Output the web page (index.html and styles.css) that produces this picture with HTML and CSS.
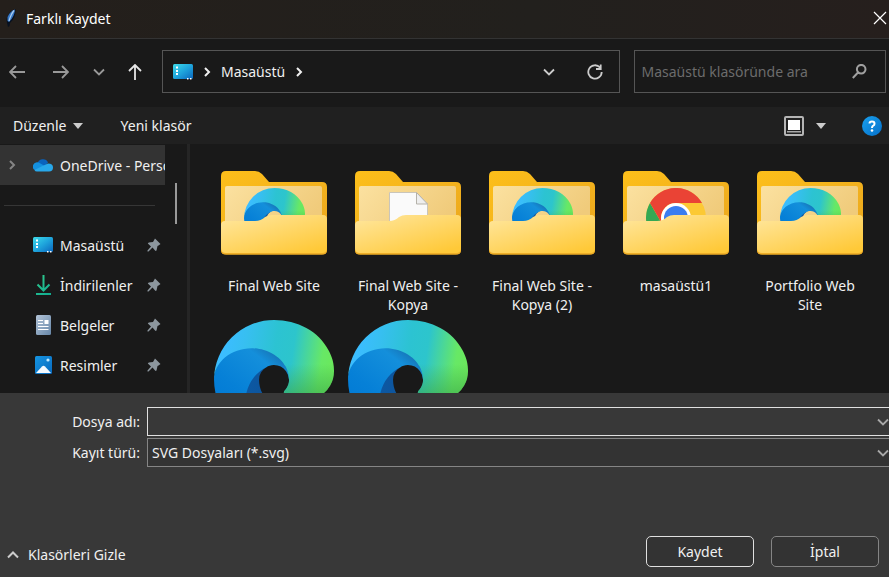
FILE: index.html
```html
<!DOCTYPE html>
<html lang="tr">
<head>
<meta charset="utf-8">
<meta name="viewport" content="width=device-width, initial-scale=1">
<title>Farklı Kaydet</title>
<link rel="stylesheet" href="styles.css">
</head>
<body>
<svg class="defs" aria-hidden="true">
  <defs>
    <linearGradient id="edge-top" x1="0" y1="0.4" x2="1" y2="0.5">
      <stop offset="0.08" stop-color="#3bbdff"/><stop offset="0.25" stop-color="#37bff0"/><stop offset="0.5" stop-color="#2cc3d2"/><stop offset="0.65" stop-color="#2dc5cc"/><stop offset="0.9" stop-color="#67e866"/><stop offset="1" stop-color="#6be85c"/>
    </linearGradient>
    <linearGradient id="edge-shade" x1="0" y1="0" x2="0" y2="1">
      <stop offset="0.55" stop-color="#3aa848" stop-opacity="0"/><stop offset="1" stop-color="#3aa848" stop-opacity="0.7"/>
    </linearGradient>
    <linearGradient id="edge-mid" x1="0.6" y1="0" x2="0.1" y2="0.8">
      <stop offset="0" stop-color="#1676b8"/><stop offset="0.15" stop-color="#148fdb"/><stop offset="0.6" stop-color="#0680d7"/><stop offset="1" stop-color="#0078d4"/>
    </linearGradient>
    <linearGradient id="edge-low" x1="0" y1="0" x2="1" y2="0">
      <stop offset="0" stop-color="#0c59a4"/><stop offset="1" stop-color="#114a8b"/>
    </linearGradient>
    <linearGradient id="folder-back" x1="0" y1="0" x2="1" y2="1">
      <stop offset="0" stop-color="#fdbf1a"/><stop offset="1" stop-color="#e9a51f"/>
    </linearGradient>
    <linearGradient id="folder-sheet" x1="0" y1="0" x2="1" y2="0.4">
      <stop offset="0" stop-color="#fbe1a0"/><stop offset="1" stop-color="#f0cb7b"/>
    </linearGradient>
    <linearGradient id="folder-front" x1="0" y1="0" x2="0.8" y2="1">
      <stop offset="0" stop-color="#ffe7a0"/><stop offset="1" stop-color="#ffc938"/>
    </linearGradient>
    <linearGradient id="screen" x1="0" y1="0" x2="1" y2="1">
      <stop offset="0" stop-color="#3ddcea"/><stop offset="0.5" stop-color="#1fa5dc"/><stop offset="1" stop-color="#0b66bd"/>
    </linearGradient>
    <linearGradient id="paper" x1="0" y1="0" x2="1" y2="1">
      <stop offset="0" stop-color="#b3c4d8"/><stop offset="1" stop-color="#6787a8"/>
    </linearGradient>
    <linearGradient id="photo" x1="0" y1="0" x2="1" y2="1">
      <stop offset="0" stop-color="#1595e2"/><stop offset="1" stop-color="#0969bd"/>
    </linearGradient>
    <linearGradient id="down" gradientUnits="userSpaceOnUse" x1="0" y1="0" x2="16" y2="20">
      <stop offset="0" stop-color="#35cf8c"/><stop offset="1" stop-color="#12ad91"/>
    </linearGradient>
    <linearGradient id="help" x1="0" y1="0" x2="1" y2="1">
      <stop offset="0" stop-color="#18a0ee"/><stop offset="1" stop-color="#0670ca"/>
    </linearGradient>
  </defs>
  <symbol id="edge" viewBox="0 0 256 256">
    <g transform="translate(-4.63 -4.92)">
      <path fill="url(#edge-low)" d="M235.68 195.46a93.73 93.73 0 0 1-10.54 4.71 101.87 101.87 0 0 1-35.9 6.46c-47.32 0-88.54-32.55-88.54-74.32A31.48 31.48 0 0 1 117.13 105c-42.8 1.8-53.8 46.4-53.8 72.53 0 73.88 68.09 81.37 82.76 81.37 7.91 0 19.84-2.3 27-4.56l1.31-.44a128.34 128.34 0 0 0 66.6-52.8 4 4 0 0 0-5.32-5.64z"/>
      <path fill="url(#edge-mid)" d="M110.34 246.34A79.2 79.2 0 0 1 87.6 225a80.72 80.72 0 0 1 29.53-120c3.12-1.47 8.45-4.13 15.54-4a32.35 32.35 0 0 1 25.69 13 31.88 31.88 0 0 1 6.36 18.66c0-.21 24.46-79.6-80-79.6-43.9 0-80 41.66-80 78.21a130.15 130.15 0 0 0 12.11 56 128 128 0 0 0 156.38 67.11 75.55 75.55 0 0 1-62.78-8z"/>
      <path fill="url(#edge-top)" d="M156.94 153.78c-.81 1.05-3.3 2.5-3.3 5.66 0 2.61 1.7 5.12 4.72 7.23 14.38 10 41.49 8.68 41.56 8.68a59.56 59.56 0 0 0 30.27-8.35A61.38 61.38 0 0 0 260.63 114c.26-22.41-8-37.31-11.34-43.91C228.12 28.73 182.44 4.92 132.63 4.92a128 128 0 0 0-128 126.2c.48-36.54 36.8-66.05 80-66.05 3.5 0 23.46.34 42 10.07 16.34 8.58 24.9 18.94 30.85 29.21 6.18 10.67 7.28 24.15 7.28 29.52s-2.74 13.33-7.82 19.91z"/>
      <path fill="url(#edge-shade)" d="M156.94 153.78c-.81 1.05-3.3 2.5-3.3 5.66 0 2.61 1.7 5.12 4.72 7.23 14.38 10 41.49 8.68 41.56 8.68a59.56 59.56 0 0 0 30.27-8.35A61.38 61.38 0 0 0 260.63 114c.26-22.41-8-37.31-11.34-43.91C228.12 28.73 182.44 4.92 132.63 4.92a128 128 0 0 0-128 126.2c.48-36.54 36.8-66.05 80-66.05 3.5 0 23.46.34 42 10.07 16.34 8.58 24.9 18.94 30.85 29.21 6.18 10.67 7.28 24.15 7.28 29.52s-2.74 13.33-7.82 19.91z"/>
    </g>
  </symbol>
  <symbol id="chrome" viewBox="0 0 60 60">
    <circle cx="30" cy="30" r="30" fill="#fcc934"/>
    <path fill="#34a853" d="M4 15A30 30 0 0 0 30 60L43 37.500 17 37.500z"/>
    <path fill="#ea4335" d="M4 15A30 30 0 0 1 56 15H30A15 15 0 0 0 17 37.500z"/>
    <circle cx="30" cy="30" r="15" fill="#fff"/>
    <circle cx="30" cy="30" r="12" fill="#3b7df0"/>
  </symbol>
  <symbol id="folder-rear" viewBox="0 0 106 84">
    <path fill="url(#folder-back)" d="M5 0H34Q38 0 41 3L48 11H101Q106 11 106 16V79Q106 83.500 101 83.500H5Q0 83.500 0 79V5Q0 0 5 0z"/>
    <path fill="url(#folder-sheet)" d="M6 15H99Q101 15 101 17V60H4V17Q4 15 6 15z"/>
  </symbol>
  <symbol id="folder-face" viewBox="0 0 106 84">
    <path fill="#eead27" d="M0 70H106V79Q106 83.500 101 83.500H5Q0 83.500 0 79z"/>
    <path fill="url(#folder-front)" d="M4 50H34Q40 50 44 46 47 44 51 44H102Q106 44 106 48V77Q106 82 101 82H5Q0 82 0 77V54Q0 50 4 50z"/>
  </symbol>
  <symbol id="desktop" viewBox="0 0 20 16">
    <rect width="20" height="15" rx="1.500" fill="url(#screen)"/>
    <path fill="#fff" d="M3 2.500h2v2H3zM3 6h2v2H3zM3 9h2v2H3zM14 14h1.500v1.500H14zM17 14h1.500v1.500H17z"/>
  </symbol>
  <symbol id="pin" viewBox="0 0 14 14">
    <path fill="#8c969e" d="M8 .5 13.500 6 11.500 7.500 10.500 8 9.500 12.500 8.500 13 5.500 9.500 1.500 13.500.5 13.500.5 12.500 4 8.500.8 5.500 1.800 4.500 6 4z"/>
  </symbol>
  <symbol id="chevron" viewBox="0 0 12 8">
    <path fill="none" stroke="currentColor" stroke-width="1.800" d="M1 1.500 6 6.500 11 1.500"/>
  </symbol>
  <symbol id="chevron-right" viewBox="0 0 8 12">
    <path fill="none" stroke="currentColor" stroke-width="2" d="M2 2 6 6 2 10"/>
  </symbol>
</svg>

<header class="titlebar">
  <svg class="feather" viewBox="0 0 10 18" aria-hidden="true">
    <path fill="#07101f" d="M9.500 0Q3 2 .5 10L1 14 2 18 3.500 17 4 14Q10 9 9.500 0z"/>
    <path fill="#3676c4" d="M9 .5Q4 2 1.500 8L1.500 12 3 13Q8.500 8 9 .5z"/>
    <path fill="none" stroke="#a9cdf0" stroke-width="1.200" d="M8 1.500Q5 5 3 12"/>
  </svg>
  <h1 class="title">Farklı Kaydet</h1>
  <button class="close" type="button" aria-label="Kapat">
    <svg viewBox="0 0 12 12" width="12" height="12"><path stroke="#fff" stroke-width="1.200" d="M0 0 12 12M12 0 0 12"/></svg>
  </button>
</header>

<nav class="navbar">
  <div class="history">
    <button class="nav-button" type="button" aria-label="Geri"><svg viewBox="0 0 16 14" width="16" height="14"><path d="M16 7H1M7 1 1 7 7 13"/></svg></button>
    <button class="nav-button" type="button" aria-label="İleri"><svg viewBox="0 0 16 14" width="16" height="14"><path d="M0 7H15M9 1 15 7 9 13"/></svg></button>
    <button class="nav-button recent" type="button" aria-label="Son konumlar"><svg width="12" height="8"><use href="#chevron"/></svg></button>
    <button class="nav-button up" type="button" aria-label="Yukarı"><svg viewBox="0 0 14 16" width="14" height="16"><path d="M7 16V1M1 7 7 1 13 7"/></svg></button>
  </div>
  <div class="address">
    <svg width="20" height="16" aria-hidden="true"><use href="#desktop"/></svg>
    <svg width="8" height="12" aria-hidden="true"><use href="#chevron-right"/></svg>
    <a class="crumb" href="#">Masaüstü</a>
    <svg width="8" height="12" aria-hidden="true"><use href="#chevron-right"/></svg>
    <button class="address-button history-drop" type="button" aria-label="Önceki konumlar"><svg width="12" height="8"><use href="#chevron"/></svg></button>
    <button class="address-button" type="button" aria-label="Yenile">
      <svg viewBox="0 0 16 16" width="16" height="16"><path fill="none" stroke="currentColor" stroke-width="1.800" d="M13 3.500A6.700 6.700 0 1 0 14.700 8M13.700 .5V5H9"/></svg>
    </button>
  </div>
  <div class="search">
    <input class="search-input" type="search" aria-label="Ara" placeholder="Masaüstü klasöründe ara">
    <svg viewBox="0 0 15 15" width="15" height="15" aria-hidden="true"><path fill="none" stroke="currentColor" stroke-width="2" d="M13.500 5.200A4.300 4.300 0 1 1 4.900 5.200 4.300 4.300 0 1 1 13.500 5.200zM6 8.500.8 14"/></svg>
  </div>
</nav>

<div class="toolbar">
  <button class="tool" type="button">Düzenle <span class="caret"></span></button>
  <button class="tool" type="button">Yeni klasör</button>
  <button class="view" type="button" aria-label="Görünüm">
    <svg viewBox="0 0 20 20" width="20" height="20"><rect x="1" y="1" width="18" height="18" rx="1" fill="#222" stroke="#b5b5b5" stroke-width="2"/><path fill="#fff" d="M4 4h12v10H4z"/><path fill="#aaa" d="M3 15h14v1.500H3z"/></svg>
    <span class="caret"></span>
  </button>
  <button class="help" type="button" aria-label="Yardım">
    <svg viewBox="0 0 20 20" width="20" height="20"><circle cx="10" cy="10" r="10" fill="url(#help)"/><path fill="none" stroke="#fff" stroke-width="2" d="M7.500 7.500Q7.500 5.500 10 5.500T12.500 7.700Q12.500 9 11.200 9.700 10 10.300 10 12"/><circle cx="10" cy="14.500" r="1.300" fill="#fff"/></svg>
  </button>
</div>

<main class="browser">
  <aside class="sidebar">
    <div class="tree">
      <a class="place selected" href="#">
        <svg class="expander" width="8" height="12"><use href="#chevron-right"/></svg>
        <svg class="place-icon" viewBox="0 0 20 20" width="20" height="20"><path fill="#0a63bd" d="M4.500 9A5.500 5.500 0 0 1 15 7.500L10 13z"/><path fill="#1490df" d="M4.500 16A4.400 4.400 0 1 1 7 8.200L17 14z"/><path fill="#28a8ea" d="M4 16.500Q2 16.500 1.500 15L9.500 11 15 8.500Q20 8.500 20 12.500T16 16.500z"/></svg>
        <span class="place-name">OneDrive - Personal</span>
      </a>
      <hr class="divider">
      <a class="place" href="#">
        <svg class="place-icon" viewBox="0 -2 20 20" width="20" height="20"><use href="#desktop" width="20" height="16"/></svg>
        <span class="place-name">Masaüstü</span>
        <svg class="pin" width="14" height="14"><use href="#pin"/></svg>
      </a>
      <a class="place" href="#">
        <svg class="place-icon" viewBox="0 0 20 20" width="20" height="20"><path fill="none" stroke="url(#down)" stroke-width="2" d="M10.500 0V15M4.500 9.500 10.500 15.500 16.500 9.500M3 19H18"/></svg>
        <span class="place-name">İndirilenler</span>
        <svg class="pin" width="14" height="14"><use href="#pin"/></svg>
      </a>
      <a class="place" href="#">
        <svg class="place-icon" viewBox="0 0 20 20" width="20" height="20"><rect x="3" width="15" height="20" rx="1.500" fill="url(#paper)"/><path fill="#fff" d="M5 5h5v1H5zM5 8h5v1H5zM11.500 5H15.500V9H11.500zM5 11h10.500v1H5zM5 14h10.500v1H5z"/></svg>
        <span class="place-name">Belgeler</span>
        <svg class="pin" width="14" height="14"><use href="#pin"/></svg>
      </a>
      <a class="place" href="#">
        <svg class="place-icon" viewBox="0 0 20 20" width="20" height="20"><rect x="2" y="1" width="17" height="18" rx="1.500" fill="url(#photo)"/><path fill="#f4faff" d="M3 18 9 11.500Q10.500 10 12 11.500L18 18z"/><circle cx="15" cy="5" r="1.600" fill="#bfe9ff"/></svg>
        <span class="place-name">Resimler</span>
        <svg class="pin" width="14" height="14"><use href="#pin"/></svg>
      </a>
    </div>
    <div class="scroll-track"><span class="scroll-thumb"></span></div>
  </aside>
  <section class="files" aria-label="Dosyalar">
    <a class="file" href="#">
      <svg class="thumb" viewBox="-7 -18 120 120"><use href="#folder-rear" width="106" height="84"/><use href="#edge" x="23" y="17" width="61" height="61"/><use href="#folder-face" width="106" height="84"/></svg>
      <span class="file-name">Final Web Site</span>
    </a>
    <a class="file" href="#">
      <svg class="thumb" viewBox="-7 -18 120 120"><use href="#folder-rear" width="106" height="84"/><path fill="#fafafa" stroke="#c9c5ba" stroke-width="1" d="M34.500 21.500H61.500L72.500 33V60H34.500z"/><path fill="#eee" stroke="#b5b2aa" stroke-width="1" d="M61.500 21.500V33H72.500z"/><use href="#folder-face" width="106" height="84"/></svg>
      <span class="file-name">Final Web Site - Kopya</span>
    </a>
    <a class="file" href="#">
      <svg class="thumb" viewBox="-7 -18 120 120"><use href="#folder-rear" width="106" height="84"/><use href="#edge" x="23" y="17" width="61" height="61"/><use href="#folder-face" width="106" height="84"/></svg>
      <span class="file-name">Final Web Site - Kopya (2)</span>
    </a>
    <a class="file" href="#">
      <svg class="thumb" viewBox="-7 -18 120 120"><use href="#folder-rear" width="106" height="84"/><use href="#chrome" x="23" y="17" width="60" height="60"/><use href="#folder-face" width="106" height="84"/></svg>
      <span class="file-name">masaüstü1</span>
    </a>
    <a class="file" href="#">
      <svg class="thumb" viewBox="-7 -18 120 120"><use href="#folder-rear" width="106" height="84"/><use href="#edge" x="23" y="17" width="61" height="61"/><use href="#folder-face" width="106" height="84"/></svg>
      <span class="file-name">Portfolio Web Site</span>
    </a>
    <a class="file" href="#" aria-label="Edge belgesi"><svg class="thumb"><use href="#edge"/></svg></a>
    <a class="file" href="#" aria-label="Edge belgesi"><svg class="thumb"><use href="#edge"/></svg></a>
  </section>
</main>

<form class="save-form">
  <div class="fields">
    <label for="file-name">Dosya adı:</label>
    <div class="field name-field">
      <input class="control" id="file-name" type="text">
      <svg class="field-arrow" width="12" height="8" aria-hidden="true"><use href="#chevron"/></svg>
    </div>
    <label for="file-type">Kayıt türü:</label>
    <div class="field type-field">
      <select class="control" id="file-type"><option>SVG Dosyaları (*.svg)</option></select>
      <svg class="field-arrow" width="12" height="8" aria-hidden="true"><use href="#chevron"/></svg>
    </div>
  </div>
  <div class="actions">
    <button class="toggle" type="button">
      <svg viewBox="0 0 12 8" width="12" height="8" aria-hidden="true"><path fill="none" stroke="currentColor" stroke-width="2" d="M1 6.500 6 1.500 11 6.500"/></svg>
      Klasörleri Gizle
    </button>
    <button class="action primary" type="submit">Kaydet</button>
    <button class="action" type="button">İptal</button>
  </div>
</form>
</body>
</html>
```

FILE: styles.css
```css
* {
  box-sizing: border-box;
}

body {
  margin: 0;
  height: 100vh;
  display: flex;
  flex-direction: column;
  overflow: hidden;
  background: #191919;
  color: #f0f0f0;
  font: 14px/19px "Noto Sans", "Open Sans", sans-serif;
}

button,
input,
select {
  margin: 0;
  padding: 0;
  border: 0;
  background: none;
  color: inherit;
  font: inherit;
  outline: none;
}

a {
  color: inherit;
  text-decoration: none;
}

svg {
  display: block;
  flex: none;
}

.defs {
  position: absolute;
  width: 0;
  height: 0;
}

.titlebar {
  flex: none;
  display: flex;
  align-items: center;
  height: 39px;
  padding: 0 3px 2px 6px;
  background: linear-gradient(90deg, #241f1b, #22201d 60%, #261f1d);
  border-bottom: 1px solid #333;
}

.feather {
  width: 10px;
  height: 18px;
}

.title {
  flex: 1;
  margin: 0 0 0 10px;
  color: #fff;
  font-size: 14px;
  font-weight: 400;
}

.close svg {
  overflow: visible;
}

.navbar {
  flex: none;
  display: flex;
  padding: 11px 3px 14px 0;
}

.history {
  display: flex;
  gap: 10px;
  margin-right: 12px;
}

.nav-button {
  display: grid;
  place-items: center;
  width: 34px;
  color: #999;
}

.nav-button path {
  fill: none;
  stroke: currentColor;
  stroke-width: 1.8;
}

.recent {
  width: 22px;
}

.up {
  width: 30px;
  color: #e6e6e6;
}

.address,
.search {
  display: flex;
  align-items: center;
  height: 43px;
  border: 1px solid #555;
}

.address {
  flex: 1;
  gap: 10px;
  padding: 0 16px 0 10px;
}

.address-button {
  color: #ccc;
}

.history-drop {
  margin-left: auto;
  margin-right: 22px;
}

.search {
  flex: 0 0 28.5%;
  margin-left: 14px;
  padding: 0 18px 0 7px;
  color: #a0a0a0;
}

.search-input {
  flex: 1;
  min-width: 0;
  appearance: none;
}

.search-input::placeholder {
  color: #6c6c6c;
  opacity: 1;
}

.toolbar {
  flex: none;
  display: flex;
  align-items: center;
  height: 37px;
  padding: 0 7px 0 13px;
  background: #202020;
}

.tool {
  display: flex;
  align-items: center;
  gap: 6px;
  margin-right: 38px;
}

.caret {
  border: 5px solid transparent;
  border-top: 6px solid #ccc;
  border-bottom: 0;
}

.view {
  display: flex;
  align-items: center;
  gap: 12px;
  margin-left: auto;
  margin-right: 36px;
}

.browser {
  flex: 1;
  min-height: 0;
  display: flex;
}

.sidebar {
  flex: none;
  display: flex;
  width: 190px;
  padding-top: 1px;
  border-right: 3px solid #252525;
}

.tree {
  width: 165px;
}

.place {
  display: flex;
  align-items: center;
  height: 40px;
  padding-left: 33px;
  overflow: hidden;
}

.selected {
  padding-left: 8px;
  background: #333;
}

.expander {
  margin-right: 17px;
  color: #858585;
}

.place-icon {
  margin-right: 7px;
}

.place-name {
  flex: 1;
  white-space: nowrap;
}

.pin {
  margin-right: 4px;
}

.divider {
  height: 1px;
  margin: 20px 10px 19px 4px;
  border: 0;
  background: #363636;
}

.scroll-track {
  padding: 38px 0 0 10px;
}

.scroll-thumb {
  display: block;
  width: 2px;
  height: 41px;
  background: #999;
}

.files {
  flex: 1;
  display: grid;
  grid-template-columns: repeat(auto-fill, 134px);
  grid-auto-rows: 161px;
  row-gap: 6px;
  padding: 9px 0 0 17px;
  overflow: hidden;
}

.file {
  display: flex;
  flex-direction: column;
  align-items: center;
  gap: 3px;
}

.thumb {
  width: 120px;
  height: 120px;
}

.file-name {
  max-width: 110px;
  text-align: center;
}

.save-form {
  flex: none;
  display: flex;
  flex-direction: column;
  justify-content: space-between;
  gap: 69px;
  padding: 14px 0 10px;
  background: #383838;
}

.fields {
  display: grid;
  grid-template-columns: 140px 1fr;
  gap: 2px 7px;
  align-items: center;
  text-align: right;
}

.field {
  display: flex;
  align-items: center;
  height: 29px;
  border: 1px solid #858585;
  border-right: 0;
  background: #333;
  color: #a8a8a8;
}

.name-field {
  border-color: #e0e0e0;
  background: #383838;
}

.control {
  flex: 1;
  min-width: 0;
  height: 100%;
  padding-left: 4px;
  appearance: none;
  color: #f0f0f0;
}

.actions {
  display: flex;
  align-items: center;
  gap: 17px;
  padding: 0 10px 0 7px;
}

.toggle {
  display: flex;
  align-items: center;
  gap: 9px;
  margin: 6px auto 0 0;
}

.toggle svg {
  color: #ccc;
}

.action {
  width: 108px;
  height: 31px;
  border: 1px solid #858585;
  border-radius: 5px;
  background: #333;
}

.primary {
  border-color: #e0e0e0;
}
```
